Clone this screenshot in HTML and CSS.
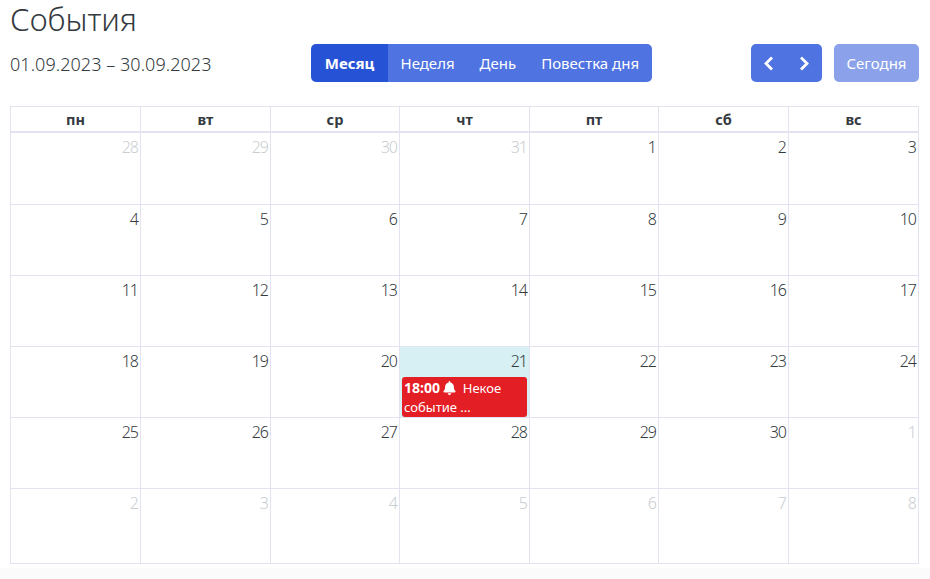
FILE: index.html
```html
<!DOCTYPE html>
<html lang="ru"><head>
    <meta charset="utf-8">
    <title>События</title>
    <link rel="stylesheet" href="styles.css">
</head>
<body>
    <div class="page">
        <h1>События</h1>
        <div class="toolbar">
            <div class="range">01.09.2023 – 30.09.2023</div>
            <div class="views">
                <button class="btn active">Месяц</button>
                <button class="btn">Неделя</button>
                <button class="btn">День</button>
                <button class="btn">Повестка дня</button>
            </div>
            <div class="nav">
                <div class="arrows">
                    <button class="btn arrow" aria-label="Назад">
                        <svg width="11" height="15" viewBox="0 0 11 15"><path d="M9 1.5 3 7.5 9 13.5" fill="none" stroke="#fff" stroke-width="2.8"/></svg>
                    </button>
                    <button class="btn arrow" aria-label="Вперёд">
                        <svg width="11" height="15" viewBox="0 0 11 15"><path d="M2 1.5 8 7.5 2 13.5" fill="none" stroke="#fff" stroke-width="2.8"/></svg>
                    </button>
                </div>
                <button class="btn today">Сегодня</button>
            </div>
        </div>
        <table class="calendar">
            <thead>
                <tr><th>пн</th><th>вт</th><th>ср</th><th>чт</th><th>пт</th><th>сб</th><th>вс</th></tr>
            </thead>
            <tbody>
                <tr class="first">
                    <td class="other">28</td><td class="other">29</td><td class="other">30</td><td class="other">31</td><td>1</td><td>2</td><td>3</td>
                </tr>
                <tr>
                    <td>4</td><td>5</td><td>6</td><td>7</td><td>8</td><td>9</td><td>10</td>
                </tr>
                <tr>
                    <td>11</td><td>12</td><td>13</td><td>14</td><td>15</td><td>16</td><td>17</td>
                </tr>
                <tr>
                    <td>18</td><td>19</td><td>20</td>
                    <td class="now">
                        <div>21</div>
                        <div class="event">
                            <div><b>18:00</b>
                            <svg class="bell" width="13" height="14" viewBox="0 0 448 512"><path fill="#fff" d="M224 512c35 0 64-29 64-64H160c0 35 29 64 64 64zm215-150c-19-21-55-52-55-154 0-78-54-140-128-155V32a32 32 0 1 0-64 0v21C118 68 64 130 64 208c0 102-36 133-55 154-6 6-9 14-9 22 0 16 13 32 32 32h384c19 0 32-16 32-32 0-8-3-16-9-22z"/></svg>
                            Некое</div>
                            <div>событие ...</div>
                        </div>
                    </td>
                    <td>22</td><td>23</td><td>24</td>
                </tr>
                <tr>
                    <td>25</td><td>26</td><td>27</td><td>28</td><td>29</td><td>30</td><td class="other">1</td>
                </tr>
                <tr class="last">
                    <td class="other">2</td><td class="other">3</td><td class="other">4</td><td class="other">5</td><td class="other">6</td><td class="other">7</td><td class="other">8</td>
                </tr>
            </tbody>
        </table>
    </div>
</body></html>
```

FILE: styles.css
```css
html {
    background: #fbfbfb;
}

body {
    font-family: "Noto Sans", "Open Sans", sans-serif;
    font-size: 14px;
    color: #343a40;
    margin: 0;
    padding: 0;
}

.page {
    background: #fff;
    height: 568px;
    padding: 0 11px 0 10px;
    box-sizing: border-box;
}

h1 {
    font-size: 31px;
    font-weight: 300;
    line-height: 38px;
    margin: 0;
}

.toolbar {
    display: flex;
    align-items: center;
    margin-top: 6px;
    margin-bottom: 24px;
}

.range {
    font-size: 18px;
    font-weight: 300;
    letter-spacing: 0.05px;
    flex: 0 0 301px;
    padding-top: 2px;
    white-space: nowrap;
}

.views, .arrows {
    display: flex;
    border-radius: 5px;
    overflow: hidden;
}

.nav {
    display: flex;
    gap: 12px;
    margin-left: auto;
}

.btn {
    font-family: inherit;
    font-size: 15px;
    color: #fff;
    background: #4f73e0;
    border: none;
    height: 38px;
    padding: 0 12.5px;
}

.btn.active {
    background: #2652d6;
    font-weight: 700;
    width: 77px;
    padding: 0;
}

.arrow {
    width: 35.5px;
    padding: 0;
    display: flex;
    align-items: center;
    justify-content: center;
}

.today {
    background: #8ba2ea;
    border-radius: 5px;
    width: 85px;
    padding: 0;
}

.calendar {
    width: 909px;
    table-layout: fixed;
    border-collapse: collapse;
}

.calendar th, .calendar td {
    border: 1px solid #e2e2f0;
    box-sizing: border-box;
}

.calendar th {
    font-size: 14.5px;
    font-weight: 700;
    height: 25px;
    width: 130px;
    padding: 0;
    border-bottom-width: 2px;
}

.calendar th:nth-child(3), .calendar th:nth-child(5) {
    width: 129px;
}

.calendar td {
    padding: 2px 2px 0 2px;
    font-size: 16px;
    letter-spacing: -1px;
    font-weight: 300;
    text-align: right;
    vertical-align: top;
    line-height: 24px;
    height: 71px;
}

.calendar .first td {
    height: 73px;
}

.calendar .last td {
    height: 75px;
}

.calendar td.other {
    color: #c9cdd1;
}

.calendar td.now {
    background: #d6f0f3;
}

.event {
    background: #e31e24;
    color: #fff;
    border-radius: 3px;
    text-align: left;
    font-size: 13px;
    letter-spacing: 0;
    font-weight: 400;
    line-height: 19px;
    padding: 1px 2px 0 2px;
    margin: 4px 0 0 0;
    height: 40px;
    box-sizing: border-box;
}

.event b {
    font-size: 14px;
}

.bell {
    vertical-align: -2px;
    margin-right: 3px;
}
```
